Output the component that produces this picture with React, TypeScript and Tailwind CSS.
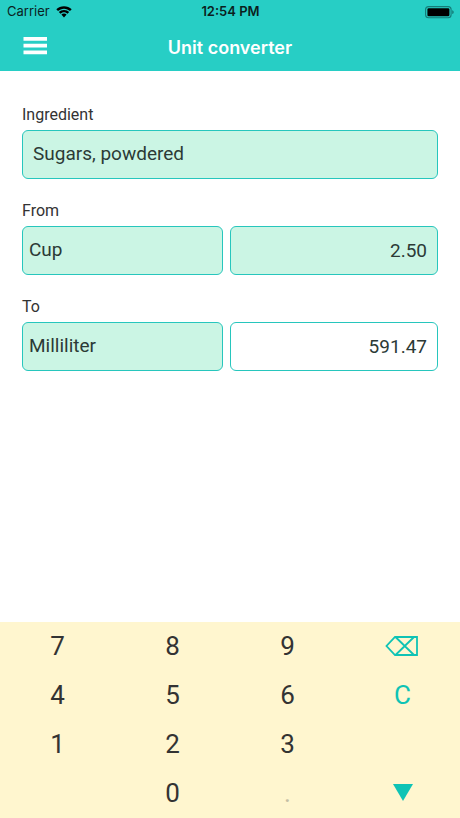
import React, { useState } from 'react'

const ingredients = ['Sugars, powdered', 'Sugars, granulated', 'Flour', 'Butter']
const units = ['Cup', 'Milliliter', 'Tablespoon', 'Teaspoon']

const fieldClass =
  'block w-full h-[49px] appearance-none rounded-md border border-[#27c6bd] text-[19px] text-[#2c3a36] outline-none'
const labelClass = 'block h-6 mb-[3px] text-base leading-6 text-[#333333]'
const keyClass = 'flex h-[49px] items-center justify-center pb-[2px] text-[26px] leading-none'

function StatusBar() {
  return (
    <div className="grid h-6 grid-cols-3 items-center pl-[7px] pr-[6px] font-['Inter',sans-serif] text-[13px] text-[#0b1f1e]">
      <div className="flex items-center gap-[6px]">
        <span>Carrier</span>
        <svg width="16" height="12" viewBox="0 0 16 12" fill="#000" aria-hidden="true">
          <path d="M8 0.300C5 .3 2.300 1.400.3 3.300L2 5.100C3.600 3.600 5.700 2.700 8 2.700s4.400.9 6 2.400l1.700-1.800C13.700 1.400 11 .3 8 .3Z" />
          <path d="M8 3.900c-2 0-3.900.8-5.200 2.100l1.700 1.800C5.400 6.900 6.600 6.300 8 6.300s2.600.6 3.500 1.500l1.700-1.800C11.900 4.700 10 3.900 8 3.900Z" />
          <path d="M8 7.500c-1 0-1.900.4-2.600 1.100L8 11.400l2.600-2.800c-.7-.7-1.600-1.100-2.600-1.100Z" />
        </svg>
      </div>
      <span className="text-center font-semibold">12:54 PM</span>
      <svg className="ml-auto" width="29" height="13" viewBox="0 0 29 13" aria-hidden="true">
        <rect x="0.600" y="0.600" width="25.500" height="11.200" rx="3" fill="none" stroke="#147c78" strokeWidth="1.100" />
        <rect x="2.400" y="2.200" width="22" height="8" rx="1.300" fill="#000" />
        <path d="M27.200 4.300c1 .3 1.500 1.100 1.500 1.900s-.5 1.600-1.500 1.900Z" fill="#147c78" />
      </svg>
    </div>
  )
}

function Header() {
  return (
    <header className="bg-[#27cec5]">
      <StatusBar />
      <div className="grid h-[47px] grid-cols-[1fr_auto_1fr] items-center px-[22px]">
        <button type="button" aria-label="Menu" className="w-fit pb-1">
          <svg width="26" height="18" viewBox="0 0 26 18" fill="#fff" aria-hidden="true">
            <path d="M1.500 0h23.500v3.700h-23.500zM1.500 6.800h23.500v3.700h-23.500zM1.500 13.600h23.500v3.700h-23.500z" />
          </svg>
        </button>
        <h1 className="font-['Inter',sans-serif] text-lg font-semibold text-white">Unit converter</h1>
      </div>
    </header>
  )
}

function BackspaceIcon() {
  return (
    <svg width="36" height="20" viewBox="0 0 36 20" fill="none" stroke="#0fc3b5" strokeWidth="1.800" aria-hidden="true">
      <path d="M10 1H32V19H10L1.500 10ZM10.500 1l18.500 18M29 1L10.500 19" />
    </svg>
  )
}

interface KeypadProps {
  onDigit: (digit: string) => void
  onBackspace: () => void
  onClear: () => void
}

function Keypad({ onDigit, onBackspace, onClear }: KeypadProps) {
  const digit = (d: string) => (
    <button type="button" className={`${keyClass} text-[#333333]`} onClick={() => onDigit(d)}>
      {d}
    </button>
  )
  return (
    <div className="grid grid-cols-4 bg-[#fff6cf]">
      {digit('7')}
      {digit('8')}
      {digit('9')}
      <button type="button" aria-label="Backspace" className={keyClass} onClick={onBackspace}>
        <BackspaceIcon />
      </button>
      {digit('4')}
      {digit('5')}
      {digit('6')}
      <button type="button" className={`${keyClass} text-[#0fc3b5]`} onClick={onClear}>
        C
      </button>
      {digit('1')}
      {digit('2')}
      {digit('3')}
      <span />
      <span />
      {digit('0')}
      <button type="button" disabled className={`${keyClass} text-[#c4bea4]`}>
        .
      </button>
      <button type="button" aria-label="Hide keypad" className={keyClass}>
        <svg width="20" height="17" viewBox="0 0 20 17" fill="#0fc3b5" aria-hidden="true">
          <path d="M0 0H20L10 17Z" />
        </svg>
      </button>
    </div>
  )
}

export default function App() {
  const [amount, setAmount] = useState('2.50')
  const result = (Number(amount) * 236.588).toFixed(2)

  return (
    <div className="flex min-h-screen flex-col bg-white font-['Roboto',sans-serif]">
      <Header />
      <main className="flex flex-1 flex-col gap-5 px-[22px] pt-8 pb-6">
        <div>
          <label htmlFor="ingredient" className={labelClass}>Ingredient</label>
          <select id="ingredient" className={`${fieldClass} bg-[#cbf5e4] px-[10px]`}>
            {ingredients.map((name) => (
              <option key={name}>{name}</option>
            ))}
          </select>
        </div>
        <div>
          <label htmlFor="from-unit" className={labelClass}>From</label>
          <div className="grid grid-cols-[201fr_208fr] gap-[7px]">
            <select id="from-unit" className={`${fieldClass} bg-[#cbf5e4] px-[6px]`} defaultValue="Cup">
              {units.map((unit) => (
                <option key={unit}>{unit}</option>
              ))}
            </select>
            <input
              aria-label="Amount"
              inputMode="none"
              className={`${fieldClass} bg-[#cbf5e4] px-[10px] text-right`}
              value={amount}
              onChange={(e) => setAmount(e.target.value)}
            />
          </div>
        </div>
        <div>
          <label htmlFor="to-unit" className={labelClass}>To</label>
          <div className="grid grid-cols-[201fr_208fr] gap-[7px]">
            <select id="to-unit" className={`${fieldClass} bg-[#cbf5e4] px-[6px]`} defaultValue="Milliliter">
              {units.map((unit) => (
                <option key={unit}>{unit}</option>
              ))}
            </select>
            <input aria-label="Result" readOnly className={`${fieldClass} bg-white px-[10px] text-right`} value={result} />
          </div>
        </div>
      </main>
      <Keypad
        onDigit={(d) => setAmount(amount + d)}
        onBackspace={() => setAmount(amount.slice(0, -1))}
        onClear={() => setAmount('')}
      />
    </div>
  )
}
